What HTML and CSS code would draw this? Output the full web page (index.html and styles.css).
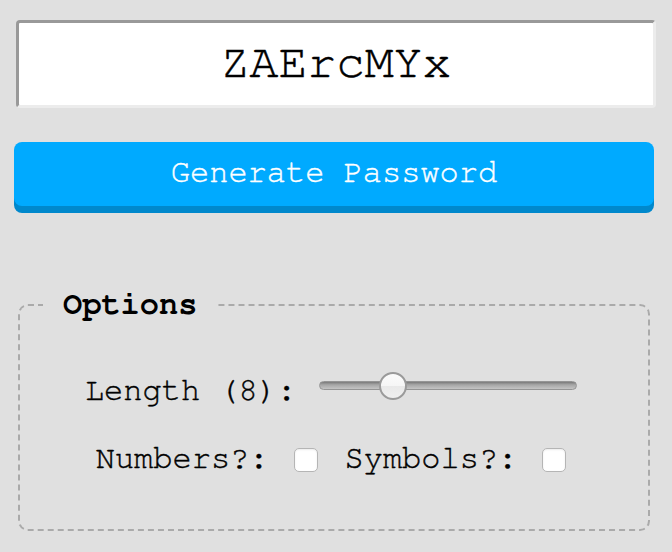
FILE: index.html
```html
<!DOCTYPE html>
<html lang="en">
<head>
<meta charset="utf-8">
<title>Password Generator</title>
<link rel="stylesheet" href="styles.css">
</head>
<body>
<main class="app">
  <input class="output" type="text" value="ZAErcMYx" readonly>
  <button class="generate" type="button">Generate Password</button>
  <fieldset class="options">
    <legend class="options-title">Options</legend>
    <div class="row">
      <label class="label" for="len">Length (8):</label>
      <input class="slider" id="len" type="range" min="1" max="28" value="8">
    </div>
    <div class="row row-checks">
      <label class="label" for="num">Numbers?:</label>
      <input class="check" id="num" type="checkbox">
      <label class="label label-sym" for="sym">Symbols?:</label>
      <input class="check" id="sym" type="checkbox">
    </div>
  </fieldset>
</main>
</body>
</html>
```
FILE: styles.css
```css
html, body {
  background: #e0e0e0;
}
body {
  margin: 0;
  padding: 20px 16px 0;
  font-family: "Nimbus Mono PS", "Nimbus Mono L", "FreeMono", "Courier", "Liberation Mono", monospace;
  color: #000;
  -webkit-text-stroke: 0.4px currentColor;
}
.app {
  display: flex;
  flex-direction: column;
}
.output {
  box-sizing: border-box;
  width: 100%;
  height: 88px;
  margin: 0;
  padding: 0 0 2px;
  border: 3px solid;
  border-color: #999 #ececec #ececec #999;
  border-radius: 4px;
  background: #fff;
  font-family: inherit;
  font-size: 48px;
  text-align: center;
  color: #000;
  outline: none;
  -webkit-text-stroke: 0.5px #000;
}
.generate {
  box-sizing: border-box;
  width: 640px;
  height: 64px;
  margin: 34px -2px 0;
  padding: 0 0 4px;
  border: none;
  border-radius: 8px;
  background: #00aaff;
  box-shadow: 0 7px 0 #0088cc;
  color: #fff;
  font-family: inherit;
  font-size: 32px;
  cursor: pointer;
  -webkit-text-stroke: 0.4px #fff;
}
.options {
  margin: 80px 6px 0 2px;
  padding: 50px 27px 51px 21px;
  border: 2px dashed #aaa;
  border-radius: 10px;
  min-width: 0;
  display: flex;
  flex-direction: column;
  gap: 32px;
}
.options-title {
  margin-left: 2px;
  padding: 0 20px 2px;
  font-size: 32px;
  font-weight: bold;
  line-height: 36px;
  -webkit-text-stroke: 0;
}
.row {
  display: flex;
  justify-content: center;
  align-items: center;
  height: 36px;
}
.label {
  font-size: 32px;
  line-height: 36px;
  margin-bottom: 4px;
}
.slider {
  -webkit-appearance: none;
  appearance: none;
  width: 258px;
  height: 28px;
  margin: 0 0 13px 23px;
  padding: 0;
  background: transparent;
}
.slider::-webkit-slider-runnable-track {
  height: 9px;
  box-sizing: border-box;
  border: 1px solid #959595;
  border-radius: 5px;
  background: linear-gradient(to bottom, #7a7a7a 0%, #a6a6a6 40%, #c4c4c4 100%);
}
.slider::-webkit-slider-thumb {
  -webkit-appearance: none;
  appearance: none;
  box-sizing: border-box;
  width: 28px;
  height: 28px;
  margin-top: -10.5px;
  border: 2px solid #9a9a9a;
  border-radius: 50%;
  background: linear-gradient(to bottom, #fbfbfb 0%, #f6f6f6 50%, #e9e9e9 51%, #efefef 100%);
}
.check {
  -webkit-appearance: none;
  appearance: none;
  box-sizing: border-box;
  width: 24px;
  height: 24px;
  margin: 0 0 0 25px;
  border: 1px solid #b5b5b5;
  border-radius: 5px;
  background: #fff;
  box-shadow: inset 0 1px 2px rgba(0,0,0,0.08);
}
.label-sym {
  margin-left: 27px;
}
```
